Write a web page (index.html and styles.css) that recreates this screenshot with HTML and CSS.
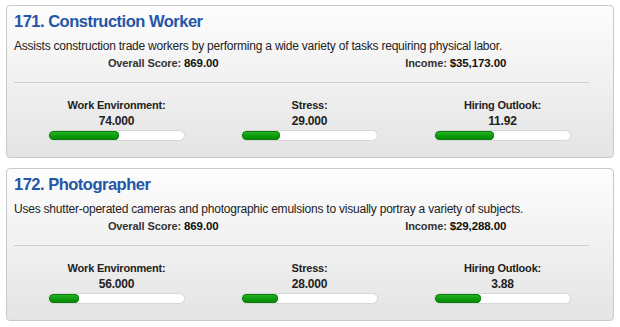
FILE: index.html
```html
<!DOCTYPE html>
<html lang="en">

<head>
  <meta charset="UTF-8" />
  <title>Jobs Rated</title>
  <link rel="stylesheet" href="styles.css">
</head>

<body>
  <!-- 171 -->
  <div class="job">
    <h2 class="job-title">171. Construction Worker</h2>
    <p class="job-desc">Assists construction trade workers by performing a wide variety of tasks requiring physical labor.</p>
    <div class="summary">
      <span>Overall Score: <b>869.00</b></span>
      <span>Income: <b>$35,173.00</b></span>
    </div>
    <div class="divider"></div>
    <div class="stats">
      <div class="stat">
        <div class="stat-label">Work Environment:</div>
        <div class="stat-value">74.000</div>
        <div class="bar"><div class="fill" style="width: 70px"></div></div>
      </div>
      <div class="stat">
        <div class="stat-label">Stress:</div>
        <div class="stat-value">29.000</div>
        <div class="bar"><div class="fill" style="width: 38px"></div></div>
      </div>
      <div class="stat">
        <div class="stat-label">Hiring Outlook:</div>
        <div class="stat-value">11.92</div>
        <div class="bar"><div class="fill" style="width: 59px"></div></div>
      </div>
    </div>
  </div>

  <!-- 172 -->
  <div class="job">
    <h2 class="job-title">172. Photographer</h2>
    <p class="job-desc">Uses shutter-operated cameras and photographic emulsions to visually portray a variety of subjects.</p>
    <div class="summary">
      <span>Overall Score: <b>869.00</b></span>
      <span>Income: <b>$29,288.00</b></span>
    </div>
    <div class="divider"></div>
    <div class="stats">
      <div class="stat">
        <div class="stat-label">Work Environment:</div>
        <div class="stat-value">56.000</div>
        <div class="bar"><div class="fill" style="width: 30px"></div></div>
      </div>
      <div class="stat">
        <div class="stat-label">Stress:</div>
        <div class="stat-value">28.000</div>
        <div class="bar"><div class="fill" style="width: 36px"></div></div>
      </div>
      <div class="stat">
        <div class="stat-label">Hiring Outlook:</div>
        <div class="stat-value">3.88</div>
        <div class="bar"><div class="fill" style="width: 46px"></div></div>
      </div>
    </div>
  </div>
</body>

</html>
```

FILE: styles.css
```css
* {
  margin: 0;
  padding: 0;
  box-sizing: border-box;
}

body {
  margin: 5px 0 0 6px;
  width: 608px;
  font-family: "Liberation Sans", Arial, sans-serif;
  color: #222;
  background: #fff;
}

.job {
  border: 1px solid #c9c9c9;
  border-radius: 4px;
  background: linear-gradient(#fdfdfd, #e4e4e4);
  padding: 4px 7px 16px 7px;
  margin-bottom: 10px;
  height: 153px;
}

.job-title {
  font-size: 16.5px;
  line-height: 22px;
  font-weight: bold;
  letter-spacing: -0.5px;
  color: #2356a6;
}

.job-desc {
  margin-top: 6px;
  font-size: 12px;
  line-height: 16px;
  letter-spacing: -0.22px;
  color: #222;
}

.summary {
  display: flex;
  margin-top: 2px;
  padding: 0 4px 0 3px;
  font-size: 11px;
  line-height: 14px;
  font-weight: bold;
  letter-spacing: -0.1px;
  color: #333;
}

.summary span {
  flex: 1;
  text-align: center;
}

.summary b {
  color: #111;
  font-size: 11.5px;
}

.divider {
  margin: 12px 17px 0 0;
  border-top: 1px solid #cfcfcf;
}

.stats {
  display: flex;
  padding: 15px 6px 0 6px;
}

.stat {
  width: 193px;
  display: flex;
  flex-direction: column;
  align-items: center;
}

.stat-label {
  font-size: 11px;
  line-height: 14px;
  font-weight: bold;
  letter-spacing: -0.2px;
  color: #222;
}

.stat-value {
  margin-top: 2px;
  font-size: 12px;
  line-height: 14px;
  font-weight: bold;
  letter-spacing: -0.2px;
  color: #222;
}

.bar {
  margin-top: 2px;
  width: 137px;
  height: 11px;
  border: 1px solid #d6d6d6;
  border-radius: 6px;
  background: #fff;
  overflow: hidden;
}

.fill {
  height: 100%;
  border-radius: 6px;
  background: linear-gradient(#2db52d, #0a9a0a 60%, #078207);
  box-shadow: inset 0 0 0 1px #0b7d0b;
}
```
